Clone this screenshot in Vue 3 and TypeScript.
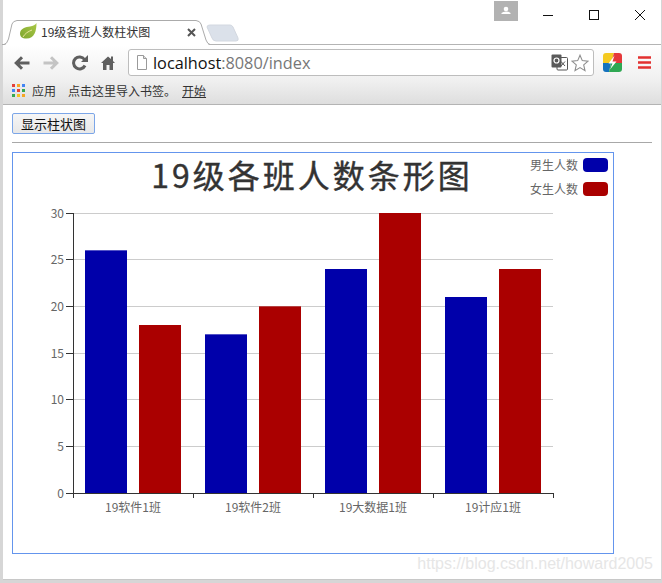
<script setup lang="ts">
const ticks = [30, 25, 20, 15, 10, 5, 0]
const top = 213
const bottom = 493
const yOf = (v: number) => bottom - ((bottom - top) * v) / 30
const groups = [
  { name: '19软件1班', boys: 26, girls: 18 },
  { name: '19软件2班', boys: 17, girls: 20 },
  { name: '19大数据1班', boys: 24, girls: 30 },
  { name: '19计应1班', boys: 21, girls: 24 },
]
const xOf = (i: number) => 73 + i * 120
</script>

<template>
  <div class="screen">
    <div class="window">
      <div class="titlebar">
        <div class="tab">
          <svg class="tab-shape" width="240" height="26" viewBox="0 0 240 26">
            <path d="M207 7Q207 5 210 5H230Q232 5 233 7L238 18Q239 21 236 21H216Q213 21 212 18Z" fill="#dbe1ea" stroke="#d3d8e0" />
            <path d="M4 26Q7 24 8.500 19L12 4Q13 1 17 0.500H196Q200 1 201 4L206 20Q207.500 24 210 26Z" fill="#fff" />
            <path d="M2 24.500H4Q7 24 8.500 19L12 4Q13 1 17 0.500H196Q200 1 201 4L206 20Q207.500 24 210 24.500" fill="none" stroke="#ababab" />
          </svg>
          <svg class="leaf" width="17" height="16" viewBox="0 0 17 16">
            <defs>
              <linearGradient id="leafFill" x1="1" y1="0" x2="0" y2="1">
                <stop offset="0" stop-color="#a9c846" />
                <stop offset="1" stop-color="#7ea62f" />
              </linearGradient>
            </defs>
            <path d="M16.500 0C16.500 8 14.500 15.500 6.500 15.500C2 15.500 0 13.500 0 10.500C0 5.500 6 4 10 3.500C13 3 15.500 2 16.500 0Z" fill="url(#leafFill)" />
            <path d="M3 14C5 10.500 8 8.500 12 7" fill="none" stroke="#e8e49a" stroke-width="1" />
          </svg>
          <span class="tab-title">19级各班人数柱状图</span>
          <svg class="tab-close" width="9" height="9" viewBox="0 0 9 9">
            <path d="M1 1L8 8M8 1L1 8" stroke="#555" stroke-width="2" />
          </svg>
        </div>
        <div class="user-badge">
          <svg width="10" height="10" viewBox="0 0 10 10">
            <circle cx="5" cy="3" r="2.300" fill="#fff" />
            <path d="M0.500 8V7Q2 5.500 5 5.500T9.500 7V8Z" fill="#fff" />
          </svg>
        </div>
        <div class="win-controls">
          <svg width="12" height="12" viewBox="0 0 12 12"><path d="M1 6.500H11" stroke="#111" /></svg>
          <svg width="12" height="12" viewBox="0 0 12 12"><rect x="1.500" y="1.500" width="9" height="9" fill="none" stroke="#111" /></svg>
          <svg width="12" height="12" viewBox="0 0 12 12"><path d="M1 1L11 11M11 1L1 11" stroke="#111" /></svg>
        </div>
      </div>

      <div class="toolbar">
        <svg class="tool" width="16" height="14" viewBox="0 0 16 14">
          <path d="M15.500 7H4M8 1.200L2.200 7L8 12.800" fill="none" stroke="#5f5f5f" stroke-width="3" />
        </svg>
        <svg class="tool" width="16" height="14" viewBox="0 0 16 14">
          <path d="M0.500 7H12M8 1.200L13.800 7L8 12.800" fill="none" stroke="#c4c4c4" stroke-width="3" />
        </svg>
        <svg class="tool" width="16" height="16" viewBox="0 0 16 16">
          <path d="M13 10.500A6 6 0 1 1 12.500 4.500" fill="none" stroke="#5f5f5f" stroke-width="3" />
          <path d="M9 7H16V0Z" fill="#5f5f5f" />
        </svg>
        <svg class="tool" width="14" height="15" viewBox="0 0 14 15">
          <path d="M7 1.500L0 8H2V15H5.500V10H8.500V15H12V8H14L12 6V1.500H10V4Z" fill="#5f5f5f" />
        </svg>
        <div class="omnibox">
          <svg width="12" height="15" viewBox="0 0 12 15">
            <path d="M1.500 0.500H7.500L10.500 3.500V14.500H1.500Z" fill="#fff" stroke="#9a9a9a" />
            <path d="M7.500 0.500V3.500H10.500" fill="#ddd" stroke="#9a9a9a" />
          </svg>
          <span class="url"><span class="host">localhost</span>:8080/index</span>
          <svg class="translate" width="17" height="17" viewBox="0 0 17 17">
            <rect x="6" y="3.500" width="10.500" height="12.500" rx="1" fill="#fff" stroke="#555" />
            <rect x="0.500" y="0.500" width="10" height="13" rx="1" fill="#5a5a5a" />
            <circle cx="5.500" cy="6.500" r="2.500" fill="none" stroke="#fff" stroke-width="1.200" />
            <path d="M10 7.500L14 12M14 7.500L10 12" stroke="#555" />
          </svg>
          <svg width="18" height="18" viewBox="0 0 18 18">
            <path d="M9 1.200L11.300 6.600L17 7.100L12.700 10.900L14 16.600L9 13.600L4 16.600L5.300 10.900L1 7.100L6.700 6.600Z" fill="#fff" stroke="#8e8e8e" stroke-width="1.100" />
          </svg>
        </div>
        <svg class="ext" width="19" height="19" viewBox="0 0 19 19">
          <path d="M3 0H11L8 10H0V3Q0 0 3 0Z" fill="#f4c91f" />
          <path d="M11 0H16Q19 0 19 3V10H8Z" fill="#e5383a" />
          <path d="M0 10H8L6 19H3Q0 19 0 16Z" fill="#1472bd" />
          <path d="M8 10H19V16Q19 19 16 19H6Z" fill="#2fa853" />
          <path d="M11.500 2.500L5.500 10.500H9.500L7 16.500L13.500 8.500H9.500Z" fill="#fff" />
        </svg>
        <svg class="menu" width="13" height="13" viewBox="0 0 13 13">
          <path d="M0 1.500H13M0 6.500H13M0 11.500H13" stroke="#e2302f" stroke-width="2.400" />
        </svg>
      </div>

      <div class="bookmarks">
        <svg width="13" height="13" viewBox="0 0 13 13">
          <rect x="0" y="0" width="3" height="3" fill="#e5403a" /><rect x="5" y="0" width="3" height="3" fill="#f6a623" /><rect x="10" y="0" width="3" height="3" fill="#4285f4" />
          <rect x="0" y="5" width="3" height="3" fill="#4285f4" /><rect x="5" y="5" width="3" height="3" fill="#e5403a" /><rect x="10" y="5" width="3" height="3" fill="#34a853" />
          <rect x="0" y="10" width="3" height="3" fill="#34a853" /><rect x="5" y="10" width="3" height="3" fill="#f6c323" /><rect x="10" y="10" width="3" height="3" fill="#f6a623" />
        </svg>
        <span class="apps">应用</span>
        <span class="hint">点击这里导入书签。</span>
        <span class="start">开始</span>
      </div>

      <main class="page">
        <button class="show" type="button">显示柱状图</button>
        <hr class="rule" />
        <div class="chart-box">
          <svg class="chart" width="600" height="400" viewBox="13 153 600 400">
            <g v-for="t in ticks" :key="t">
              <line v-if="t > 0" x1="73" x2="553" :y1="Math.floor(yOf(t)) + 0.5" :y2="Math.floor(yOf(t)) + 0.5" stroke="#ccc" />
              <line x1="66" x2="73" :y1="Math.floor(yOf(t)) + 0.5" :y2="Math.floor(yOf(t)) + 0.5" stroke="#333" />
              <text x="64" :y="yOf(t) + 4.500" text-anchor="end" class="axis-label">{{ t }}</text>
            </g>
            <g v-for="(g, i) in groups" :key="g.name">
              <rect :x="xOf(i) + 12" :y="yOf(g.boys)" width="42" :height="bottom - yOf(g.boys)" fill="#0000aa" />
              <rect :x="xOf(i) + 66" :y="yOf(g.girls)" width="42" :height="bottom - yOf(g.girls)" fill="#aa0000" />
              <line :x1="xOf(i) + 0.5" :x2="xOf(i) + 0.5" y1="493" y2="498" stroke="#333" />
              <text :x="xOf(i) + 60" y="512" text-anchor="middle" class="axis-label">{{ g.name }}</text>
            </g>
            <line x1="553.500" x2="553.500" y1="493" y2="498" stroke="#333" />
            <line x1="73.500" x2="73.500" y1="213" y2="493" stroke="#333" />
            <line x1="73" x2="554" y1="493.500" y2="493.500" stroke="#333" />
            <text x="312" y="188" text-anchor="middle" class="chart-title">19级各班人数条形图</text>
            <text x="578" y="170" text-anchor="end" class="legend-label">男生人数</text>
            <rect x="583" y="158" width="25" height="14" rx="4" fill="#0000aa" />
            <text x="578" y="194" text-anchor="end" class="legend-label">女生人数</text>
            <rect x="583" y="182" width="25" height="14" rx="4" fill="#aa0000" />
          </svg>
        </div>
        <span class="watermark">https://blog.csdn.net/howard2005</span>
      </main>
    </div>
  </div>
</template>

<style scoped>
.screen {
  width: 662px;
  height: 583px;
  box-sizing: border-box;
  padding: 0 1px 3px 3px;
  background: #d6d6d6;
  overflow: hidden;
  font-family: "Noto Sans CJK SC", "Noto Sans", sans-serif;
}
.window {
  height: 100%;
  display: flex;
  flex-direction: column;
  background: #fff;
  border-bottom: 1px solid #c8c8c8;
  box-sizing: border-box;
}
.titlebar {
  height: 45px;
  flex: none;
  display: flex;
  background: #fff;
  box-sizing: border-box;
  border-bottom: 1px solid #b4b4b4;
}
.tab {
  position: relative;
  margin-top: 20px;
  width: 237px;
  height: 24px;
  display: flex;
  align-items: center;
  padding: 0 0 2px 17px;
  box-sizing: border-box;
}
.tab-shape { position: absolute; left: -3px; top: 0; }
.leaf { position: relative; flex: none; }
.tab-title {
  position: relative;
  margin-left: 4px;
  width: 146px;
  font-size: 12px;
  color: #333;
  white-space: nowrap;
}
.tab-close { position: relative; flex: none; top: 1px; }
.user-badge {
  margin: 1px 0 0 254px;
  width: 24px;
  height: 20px;
  background: #b2b2b2;
  display: flex;
  align-items: center;
  justify-content: center;
}
.win-controls {
  margin: 9px 0 0 24px;
  display: flex;
  gap: 34px;
  height: 12px;
}
.toolbar {
  height: 35px;
  flex: none;
  display: flex;
  align-items: center;
  padding-left: 11px;
  box-sizing: border-box;
  background: linear-gradient(#ffffff, #f0f0f0);
}
.tool { flex: none; margin-right: 13px; }
.omnibox {
  width: 466px;
  height: 27px;
  box-sizing: border-box;
  flex: none;
  display: flex;
  align-items: center;
  padding: 0 4px 0 7px;
  background: #fff;
  border: 1px solid #bdbdbd;
  border-radius: 3px;
}
.url {
  margin-left: 5px;
  flex: 1;
  font-family: "Open Sans", "Noto Sans", sans-serif;
  font-size: 16.300px;
  color: #777;
  white-space: nowrap;
}
.host { color: #111; }
.translate { margin-right: 3px; }
.ext { flex: none; margin-left: 9px; }
.menu { flex: none; margin-left: 16px; }
.bookmarks {
  height: 25px;
  flex: none;
  display: flex;
  align-items: center;
  padding: 0 0 4px 9px;
  font-size: 12px;
  color: #333;
  box-sizing: border-box;
  background: linear-gradient(#f0f0f0, #dedede);
  border-bottom: 1px solid #b4b4b4;
}
.apps { margin-left: 7px; }
.hint { margin-left: 12px; }
.start { margin-left: 6px; text-decoration: underline; }
.page {
  position: relative;
  flex: 1;
  padding: 8px 9px 0;
}
.show {
  display: block;
  width: 83px;
  height: 21px;
  padding: 0;
  font-family: "Noto Sans CJK SC", sans-serif;
  font-size: 13px;
  line-height: 1;
  color: #111;
  background: linear-gradient(#f6f6f6, #e8e8e8);
  border: 1px solid #7ca6e8;
  border-radius: 2px;
}
.rule {
  margin: 8px 0 9px;
  height: 0;
  border: 0;
  border-top: 1px solid #a8a8a8;
}
.chart-box {
  width: 602px;
  height: 402px;
  box-sizing: border-box;
  border: 1px solid #6495ed;
}
.chart { display: block; overflow: visible; }
.axis-label { font-size: 12px; fill: #666; }
.legend-label { font-size: 12px; fill: #666; }
.chart-title { font-size: 32px; font-weight: 400; fill: #333; stroke: #333; stroke-width: 0.400px; letter-spacing: 3px; }
.watermark {
  position: absolute;
  right: 8px;
  bottom: 6px;
  font-family: "Liberation Sans", sans-serif;
  font-size: 16px;
  color: #e6e6e6;
  white-space: nowrap;
}
</style>
